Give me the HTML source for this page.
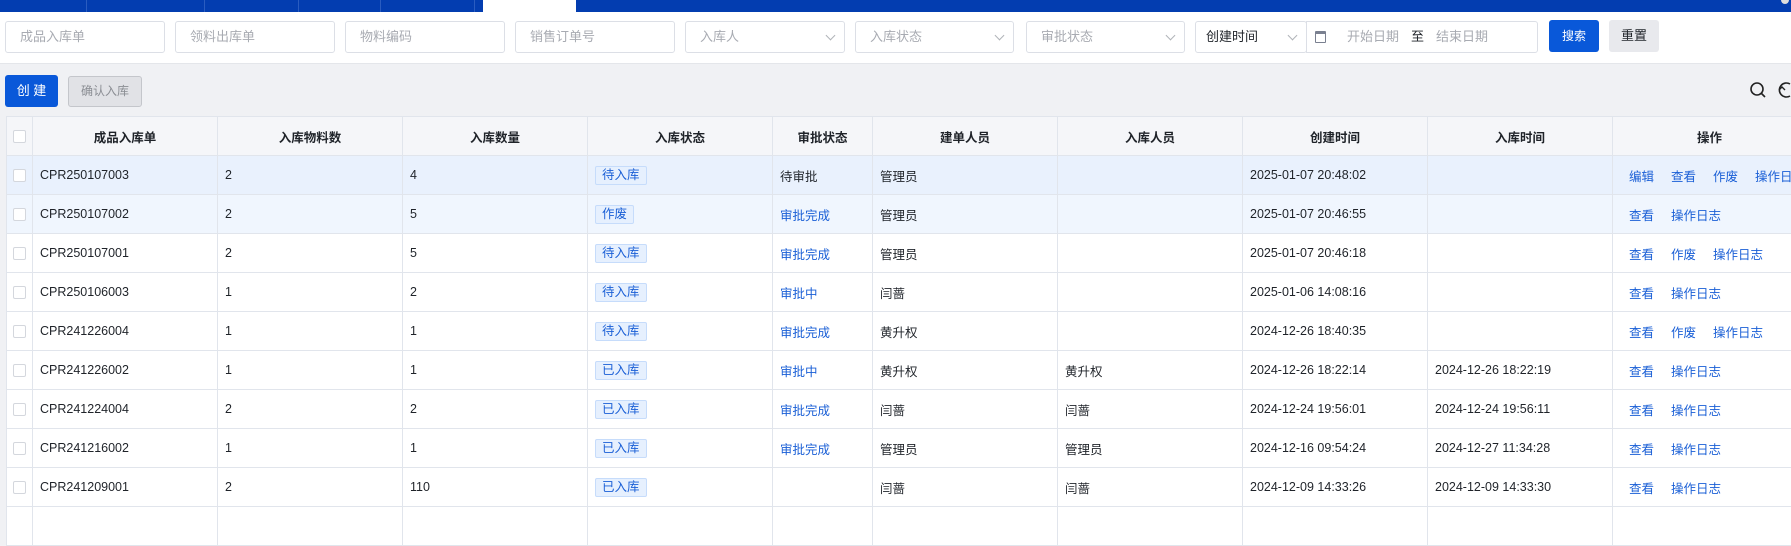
<!DOCTYPE html>
<html><head><meta charset="utf-8"><style>
*{box-sizing:border-box;margin:0;padding:0}
body{width:1791px;height:514px;overflow:hidden;background:#f0f1f4;font-family:"Liberation Sans","Noto Sans CJK SC",sans-serif;font-size:12px;color:#1f2329;position:relative}
.abs{position:absolute}
.nav{left:0;top:0;width:1791px;height:12px;background:#033db0}
.sep{top:0;width:1px;height:12px;background:#2a5cc0}
.filter{left:0;top:12px;width:1791px;height:52px;background:#fff;border-bottom:1px solid #e4e6ea}
.inp{top:21px;height:32px;border:1px solid #dcdfe6;border-radius:3px;background:#fff;color:#a8abb2;font-size:13px;line-height:30px;padding-left:14px}
.arr{position:absolute;right:10px;top:10px;width:7px;height:7px;border-right:1px solid #b0b3b8;border-bottom:1px solid #b0b3b8;transform:rotate(45deg)}
.btn{border-radius:3px;font-size:12px;text-align:center}
table{position:absolute;left:6px;top:116px;width:1800px;border-collapse:collapse;table-layout:fixed;background:#fff}
td,th{border:1px solid #e1e5ec;height:39px;padding:0 0 0 7px;text-align:left;white-space:nowrap;overflow:hidden;font-weight:normal;font-size:12.5px}
th{background:#f5f6f9;text-align:center;font-weight:bold;padding:0;color:#1f2329}
td.c,th.c{padding:0;text-align:center}
.cb{display:inline-block;width:13px;height:13px;border:1px solid #d4d7dd;background:#fff;border-radius:2px;vertical-align:middle}
.tag{display:inline-block;border:1px solid #c6dcfb;background:#e6f0fe;color:#1a5fd6;padding:0 6px;line-height:17px;border-radius:2px}
.bl{color:#1a5fd6}
.op{padding-left:16px}
.op a{color:#1a5fd6;margin-right:17px}
tr.h1 td{background:#e9f1fd}
tr.h2 td{background:#f0f6fe}
</style></head><body>
<div class="abs nav"></div>
<div class="abs sep" style="left:86px"></div><div class="abs sep" style="left:204px"></div><div class="abs sep" style="left:298px"></div><div class="abs sep" style="left:380px"></div><div class="abs sep" style="left:474px"></div>
<div class="abs" style="left:483px;top:0;width:93px;height:12px;background:#fff"></div>
<div class="abs" style="left:1781px;top:0;width:8px;height:4px;border-radius:0 0 4px 4px;background:#ddd"></div>
<div class="abs filter"></div>
<div class="abs inp" style="left:5px;width:160px">成品入库单</div>
<div class="abs inp" style="left:175px;width:160px">领料出库单</div>
<div class="abs inp" style="left:345px;width:160px">物料编码</div>
<div class="abs inp" style="left:515px;width:160px">销售订单号</div>
<div class="abs inp" style="left:685px;width:160px">入库人<span class="arr"></span></div>
<div class="abs inp" style="left:855px;width:159px">入库状态<span class="arr"></span></div>
<div class="abs inp" style="left:1026px;width:159px">审批状态<span class="arr"></span></div>
<div class="abs inp" style="left:1195px;width:112px;color:#1f2329;padding-left:10px">创建时间<span class="arr"></span></div>
<div class="abs inp" style="left:1306px;width:232px;border-radius:0 3px 3px 0;padding-left:40px">开始日期<span style="color:#1f2329;margin:0 12px">至</span>结束日期
<span style="position:absolute;left:8px;top:9px;width:11px;height:12px;border:1.5px solid #7a8090;border-top-width:3px;border-radius:1px"></span></div>
<div class="abs btn" style="left:1549px;top:20px;width:50px;height:32px;background:#0958d9;color:#fff;line-height:32px">搜索</div>
<div class="abs btn" style="left:1609px;top:20px;width:50px;height:32px;background:#e8e9ed;color:#1f2329;line-height:32px;font-size:13px">重置</div>
<div class="abs btn" style="left:5px;top:75px;width:53px;height:32px;background:#0958d9;color:#fff;line-height:32px;font-size:13px">创 建</div>
<div class="abs btn" style="left:68px;top:76px;width:74px;height:31px;background:#e1e2e6;border:1px solid #c4c6cb;color:#8a8d93;line-height:29px">确认入库</div>
<svg class="abs" style="left:1748px;top:80px" width="43" height="22"><circle cx="9" cy="9" r="6" fill="none" stroke="#222" stroke-width="1.6"/><line x1="13.5" y1="13.5" x2="17" y2="17" stroke="#222" stroke-width="1.6"/><path d="M42 4 A7 7 0 1 0 42 16" fill="none" stroke="#222" stroke-width="1.6"/><path d="M31 10 l3 -3 l3 3" fill="none" stroke="#222" stroke-width="1.4"/></svg>
<table>
<colgroup><col style="width:26px"><col style="width:185px"><col style="width:185px"><col style="width:185px"><col style="width:185px"><col style="width:100px"><col style="width:185px"><col style="width:185px"><col style="width:185px"><col style="width:185px"><col style="width:194px"></colgroup>
<tr><th><span class="cb"></span></th><th>成品入库单</th><th>入库物料数</th><th>入库数量</th><th>入库状态</th><th>审批状态</th><th>建单人员</th><th>入库人员</th><th>创建时间</th><th>入库时间</th><th>操作</th></tr>
<tr class="h1"><td class="c"><span class="cb"></span></td><td>CPR250107003</td><td>2</td><td>4</td><td><span class="tag">待入库</span></td><td>待审批</td><td>管理员</td><td></td><td>2025-01-07 20:48:02</td><td></td><td class="op"><a>编辑</a><a>查看</a><a>作废</a><a>操作日志</a></td></tr>
<tr class="h2"><td class="c"><span class="cb"></span></td><td>CPR250107002</td><td>2</td><td>5</td><td><span class="tag">作废</span></td><td class="bl">审批完成</td><td>管理员</td><td></td><td>2025-01-07 20:46:55</td><td></td><td class="op"><a>查看</a><a>操作日志</a></td></tr>
<tr><td class="c"><span class="cb"></span></td><td>CPR250107001</td><td>2</td><td>5</td><td><span class="tag">待入库</span></td><td class="bl">审批完成</td><td>管理员</td><td></td><td>2025-01-07 20:46:18</td><td></td><td class="op"><a>查看</a><a>作废</a><a>操作日志</a></td></tr>
<tr><td class="c"><span class="cb"></span></td><td>CPR250106003</td><td>1</td><td>2</td><td><span class="tag">待入库</span></td><td class="bl">审批中</td><td>闫蔷</td><td></td><td>2025-01-06 14:08:16</td><td></td><td class="op"><a>查看</a><a>操作日志</a></td></tr>
<tr><td class="c"><span class="cb"></span></td><td>CPR241226004</td><td>1</td><td>1</td><td><span class="tag">待入库</span></td><td class="bl">审批完成</td><td>黄升权</td><td></td><td>2024-12-26 18:40:35</td><td></td><td class="op"><a>查看</a><a>作废</a><a>操作日志</a></td></tr>
<tr><td class="c"><span class="cb"></span></td><td>CPR241226002</td><td>1</td><td>1</td><td><span class="tag">已入库</span></td><td class="bl">审批中</td><td>黄升权</td><td>黄升权</td><td>2024-12-26 18:22:14</td><td>2024-12-26 18:22:19</td><td class="op"><a>查看</a><a>操作日志</a></td></tr>
<tr><td class="c"><span class="cb"></span></td><td>CPR241224004</td><td>2</td><td>2</td><td><span class="tag">已入库</span></td><td class="bl">审批完成</td><td>闫蔷</td><td>闫蔷</td><td>2024-12-24 19:56:01</td><td>2024-12-24 19:56:11</td><td class="op"><a>查看</a><a>操作日志</a></td></tr>
<tr><td class="c"><span class="cb"></span></td><td>CPR241216002</td><td>1</td><td>1</td><td><span class="tag">已入库</span></td><td class="bl">审批完成</td><td>管理员</td><td>管理员</td><td>2024-12-16 09:54:24</td><td>2024-12-27 11:34:28</td><td class="op"><a>查看</a><a>操作日志</a></td></tr>
<tr><td class="c"><span class="cb"></span></td><td>CPR241209001</td><td>2</td><td>110</td><td><span class="tag">已入库</span></td><td></td><td>闫蔷</td><td>闫蔷</td><td>2024-12-09 14:33:26</td><td>2024-12-09 14:33:30</td><td class="op"><a>查看</a><a>操作日志</a></td></tr>
<tr><td class="c"></td><td></td><td></td><td></td><td></td><td></td><td></td><td></td><td></td><td></td><td></td></tr>
</table>
</body></html>
